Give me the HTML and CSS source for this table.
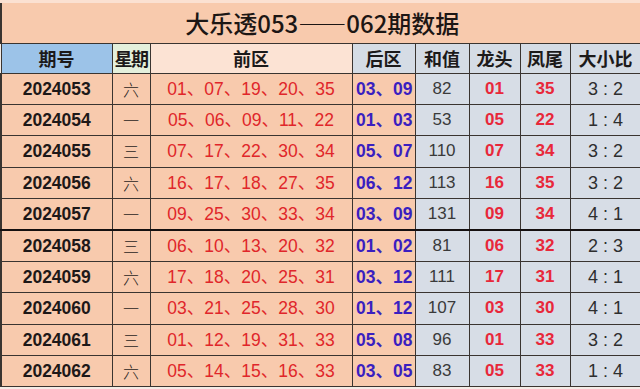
FILE: index.html
```html
<!DOCTYPE html>
<html lang="zh-CN">
<head>
<meta charset="utf-8">
<title>大乐透053——062期数据</title>
<link rel="stylesheet" href="styles.css">
</head>
<body>
<table class="grid">
  <colgroup>
    <col class="c-qh"><col class="c-xq"><col class="c-qq"><col class="c-hq"><col class="c-hz"><col class="c-lt"><col class="c-fw"><col class="c-dx">
  </colgroup>
  <thead>
    <tr class="title-row"><th colspan="8" class="title">大乐透053——062期数据</th></tr>
    <tr class="head-row">
      <th class="h-qh">期号</th>
      <th class="h-xq">星期</th>
      <th class="h-qq">前区</th>
      <th class="h-gray">后区</th>
      <th class="h-gray">和值</th>
      <th class="h-gray">龙头</th>
      <th class="h-gray">凤尾</th>
      <th class="h-gray">大小比</th>
    </tr>
  </thead>
  <tbody>
    <tr><td class="qh">2024053</td><td class="xq">六</td><td class="qq">01、07、19、20、35</td><td class="hq">03、09</td><td class="hz">82</td><td class="red">01</td><td class="red">35</td><td class="dx">3 : 2</td></tr>
    <tr><td class="qh">2024054</td><td class="xq">一</td><td class="qq">05、06、09、11、22</td><td class="hq">01、03</td><td class="hz">53</td><td class="red">05</td><td class="red">22</td><td class="dx">1 : 4</td></tr>
    <tr><td class="qh">2024055</td><td class="xq">三</td><td class="qq">07、17、22、30、34</td><td class="hq">05、07</td><td class="hz">110</td><td class="red">07</td><td class="red">34</td><td class="dx">3 : 2</td></tr>
    <tr><td class="qh">2024056</td><td class="xq">六</td><td class="qq">16、17、18、27、35</td><td class="hq">06、12</td><td class="hz">113</td><td class="red">16</td><td class="red">35</td><td class="dx">3 : 2</td></tr>
    <tr class="split"><td class="qh">2024057</td><td class="xq">一</td><td class="qq">09、25、30、33、34</td><td class="hq">03、09</td><td class="hz">131</td><td class="red">09</td><td class="red">34</td><td class="dx">4 : 1</td></tr>
    <tr><td class="qh">2024058</td><td class="xq">三</td><td class="qq">06、10、13、20、32</td><td class="hq">01、02</td><td class="hz">81</td><td class="red">06</td><td class="red">32</td><td class="dx">2 : 3</td></tr>
    <tr><td class="qh">2024059</td><td class="xq">六</td><td class="qq">17、18、20、25、31</td><td class="hq">03、12</td><td class="hz">111</td><td class="red">17</td><td class="red">31</td><td class="dx">4 : 1</td></tr>
    <tr><td class="qh">2024060</td><td class="xq">一</td><td class="qq">03、21、25、28、30</td><td class="hq">01、12</td><td class="hz">107</td><td class="red">03</td><td class="red">30</td><td class="dx">4 : 1</td></tr>
    <tr><td class="qh">2024061</td><td class="xq">三</td><td class="qq">01、12、19、31、33</td><td class="hq">05、08</td><td class="hz">96</td><td class="red">01</td><td class="red">33</td><td class="dx">3 : 2</td></tr>
    <tr><td class="qh">2024062</td><td class="xq">六</td><td class="qq">05、14、15、16、33</td><td class="hq">03、05</td><td class="hz">83</td><td class="red">05</td><td class="red">33</td><td class="dx">1 : 4</td></tr>
  </tbody>
</table>
</body>
</html>
```
FILE: styles.css
```css
html, body {
  margin: 0;
  padding: 0;
  background: #f4ece6;
}
body {
  width: 640px;
  height: 389px;
  overflow: hidden;
  font-family: "Liberation Sans", "Noto Sans CJK SC", sans-serif;
}
.grid {
  width: 640px;
  border-collapse: collapse;
  table-layout: fixed;
}
.c-qh { width: 111px; }
.c-xq { width: 38px; }
.c-qq { width: 202px; }
.c-hq { width: 63px; }
.c-hz { width: 54px; }
.c-lt { width: 51px; }
.c-fw { width: 50px; }
.c-dx { width: 71px; }

th, td {
  border: 1px solid #3a3430;
  padding: 0;
  text-align: center;
  white-space: nowrap;
  overflow: hidden;
}
.title-row th {
  height: 40px;
  background: #f8caad;
  border-top: 3px solid #fbe1d2;
  border-left: 2px solid #3a3430;
  border-right: 1px solid #f8caad;
  font-family: "Noto Sans CJK SC", "Liberation Sans", sans-serif;
  font-size: 24px;
  font-weight: 500;
  color: #1c1614;
  line-height: 40px;
  padding-left: 2px;
}
.head-row th {
  height: 29px;
  font-family: "Noto Sans CJK SC", "Liberation Sans", sans-serif;
  font-size: 18px;
  font-weight: 700;
  color: #1c1a1a;
  line-height: 29px;
}
.h-qh { background: #9cc3e8; }
.h-xq { background: #e4f0dc; letter-spacing: -1.5px; }
.h-qq { background: #fce3d4; font-weight: 500; }
.h-gray { background: #d5dce5; }

td {
  height: 30.2px;
  line-height: 30px;
  font-size: 17px;
}
td.qh, td.xq, td.qq, td.hq { background: #f8caad; }
td.hz, td.red, td.dx { background: #d7dde6; }
tbody tr td:first-child { border-left: 2px solid #3a3430; }
.split td { border-bottom: 2px solid #151010; }

.qh { font-weight: 700; color: #1e1818; font-size: 17.5px; }
.xq {
  font-family: "Noto Sans CJK SC", sans-serif;
  font-weight: 300;
  color: #2a2422;
  font-size: 16px;
}
.qq {
  color: #e0262a;
  font-size: 17.5px;
}
.hq {
  color: #3a1fc0;
  font-weight: 700;
  font-size: 17.5px;
  text-align: right;
  padding-right: 2px;
}
.hz { color: #3a3a3a; }
.red { color: #e8283a; font-weight: 700; }
.dx { color: #2e2e2e; font-size: 18px; }
```
